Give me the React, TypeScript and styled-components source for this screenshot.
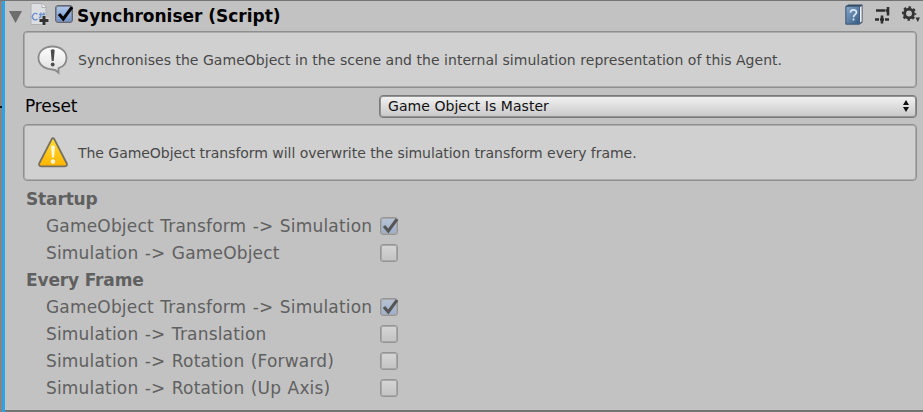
import React from "react";
import styled, { createGlobalStyle, css } from "styled-components";

const Global = createGlobalStyle`
  * { box-sizing: border-box; }
  body { margin: 0; overflow: hidden; background: #c2c2c2; font-family: "DejaVu Sans", Verdana, sans-serif; }
`;

const Inspector = styled.main`
  display: flex;
  width: 923px;
  height: 412px;
  background: #c2c2c2;
  border-top: 1px solid #747474;
`;

const Gutter = styled.div`
  width: 2px;
  flex: none;
  background: linear-gradient(#858585 0 105px, #151515 105px 107px, #858585 107px);
`;

const OverrideBar = styled.div`
  width: 3px;
  flex: none;
  background: #2fa4e4;
`;

const Component = styled.section`
  display: flex;
  flex-direction: column;
  flex: 1;
  height: 411px;
  padding-right: 6px;
  border-bottom: 2px solid #747474;
`;

const Header = styled.header`
  display: flex;
  height: 30px;
  align-items: flex-start;
  padding: 2px 0 0 4px;
`;

const Tools = styled.div`
  display: flex;
  gap: 12px;
  margin-left: auto;
  margin-right: -4px;
`;

const Label = styled.span<{ $size: number; $spacing?: number; $bold?: boolean; $color?: string }>`
  white-space: pre;
  line-height: 20px;
  font-size: ${(p) => p.$size}px;
  letter-spacing: ${(p) => p.$spacing ?? 0}px;
  font-weight: ${(p) => (p.$bold ? 700 : 400)};
  color: ${(p) => p.$color ?? "#000"};
`;

const Title = styled(Label)`
  margin-top: 3px;
`;

const HelpBox = styled.div`
  display: flex;
  align-items: center;
  flex: none;
  width: 894px;
  height: 57px;
  margin-left: 18px;
  padding: 1px 0 0 13px;
  gap: 9px;
  background: #d0d0d0;
  border: 1px solid #8f8f8f;
  border-radius: 4px;
  box-shadow: inset 0 0 0 1px #acacac;
`;

const Field = styled.div`
  display: flex;
  align-items: center;
  height: 36px;
  padding-left: 20px;
`;

const FieldName = styled.div`
  width: 354px;
  display: flex;
`;

const Popup = styled.button`
  display: flex;
  align-items: center;
  justify-content: space-between;
  width: 538px;
  height: 23px;
  padding: 0 7px 0 8px;
  border: 1px solid #7a7a7a;
  border-radius: 4px;
  background: linear-gradient(#f3f3f3, #c9c7c9);
  box-shadow: inset 0 0 0 1px #929292;
  font-family: inherit;
`;

const Settings = styled.div`
  display: flex;
  flex-direction: column;
  padding: 5px 0 0 21px;
`;

const Row = styled.div`
  display: flex;
  align-items: center;
  height: 27px;
`;

const RowName = styled.div<{ $indent?: boolean }>`
  display: flex;
  width: 354px;
  padding-left: ${(p) => (p.$indent ? 20 : 0)}px;
  padding-bottom: 2px;
  word-spacing: ${(p) => (p.$indent ? 0.8 : 0)}px;
`;

const Box = styled.span<{ $on?: boolean; $strong?: boolean }>`
  display: block;
  flex: none;
  width: 18px;
  height: 18px;
  margin-bottom: 1px;
  border: 1px solid #959595;
  border-radius: 3px;
  background: ${(p) => (p.$on ? "linear-gradient(#b7c3d4, #9dafcb)" : "linear-gradient(#d6d6d6, #c3c3c3)")};
  box-shadow: inset 0 0 0 1px ${(p) => (p.$strong ? "#7f8aa0" : "#a8a8a8")};
  ${(p) => p.$strong && css`
    border-color: #636874;
    background: linear-gradient(#b1c8e8, #6f91cb);
  `}
  svg { display: block; margin: -1px 0 0 -1px; overflow: visible; }
`;

const HeaderBox = styled(Box)`
  margin: 2px 4px 0 5px;
`;

const Foldout = styled.svg`
  margin: 8px 7px 0 0;
`;

function Toggle({ on }: { on?: boolean }) {
  return (
    <Box $on={on}>
      {on && <Check color="#555" />}
    </Box>
  );
}

function Check({ color }: { color: string }) {
  return (
    <svg width="19" height="18" viewBox="0 0 19 18">
      <path d="M4 9 8.300 14 17 2.200" fill="none" stroke={color} strokeWidth="3.100" />
    </svg>
  );
}

function ScriptIcon() {
  return (
    <svg width="20" height="23" viewBox="0 0 20 23">
      <path d="M1 .5h11.500l3.500 3.500v17.500h-15z" fill="#dcdee1" stroke="#aeb0b3" />
      <path d="M12 .5v4h4" fill="#f4f4f4" stroke="#aeb0b3" />
      <path d="M7.500 11.300A3 3.300 0 1 0 7.500 16M11 9.500l-1 7M14 9.500l-.8 4M9 11.500h6M8.700 14.500h4" fill="none" stroke="#6b8fd0" strokeWidth="1.300" />
      <path d="M14 12.500v10M9.500 17h10" stroke="#d6d6d6" strokeWidth="4.600" />
      <path d="M14 13v9M9.500 17.500h9" stroke="#333" strokeWidth="3" />
    </svg>
  );
}

function InfoIcon() {
  return (
    <svg width="32" height="32" viewBox="0 0 32 32">
      <defs>
        <linearGradient id="bubble" x1="0" y1="0" x2="0" y2="1">
          <stop offset="0" stopColor="#fff" />
          <stop offset="1" stopColor="#dcdcdc" />
        </linearGradient>
      </defs>
      <path d="M15.500 2.500C7 2.500 1.500 7.500 1.500 14S7 25 15.500 25.500q3 0 6 3.200v-4.500C27 22.500 29.500 18.500 29.500 14 29.500 7.500 24 2.500 15.500 2.500Z" fill="url(#bubble)" stroke="#8a8a8a" strokeWidth="1.800" />
      <path d="M13.700 6q2-1.600 4 0L16.700 17h-2z" fill="#4c4c4c" />
      <circle cx="15.700" cy="20.500" r="1.900" fill="#4c4c4c" />
    </svg>
  );
}

function WarningIcon() {
  return (
    <svg width="32" height="32" viewBox="0 0 32 32">
      <defs>
        <linearGradient id="amber" x1="0" y1="0" x2="0" y2="1">
          <stop offset="0" stopColor="#ffdc35" />
          <stop offset="1" stopColor="#ffb400" />
        </linearGradient>
      </defs>
      <path d="M14.600 2.300Q16 .2 17.400 2.300L29.800 26.500Q30.500 29.300 28 29.300H4Q1.500 29.300 2.200 26.500Z" fill="url(#amber)" stroke="#777061" strokeWidth="1.800" strokeLinejoin="round" />
      <path d="M14 9.500q2-2 4 0L17 20.500h-2z" fill="#fff8d8" />
      <circle cx="16" cy="24.500" r="2.200" fill="#fff8d8" />
    </svg>
  );
}

function BookIcon() {
  return (
    <svg width="19" height="22" viewBox="0 0 19 22">
      <defs>
        <linearGradient id="cover" x1="0" y1="0" x2="1" y2="1">
          <stop offset="0" stopColor="#88a9cc" />
          <stop offset="1" stopColor="#355982" />
        </linearGradient>
      </defs>
      <path d="M1.500 3 4.500 1.500h14v18l-3 2h-14z" fill="#384d66" />
      <path d="M16 4 17.700 3v15.500L16 19.700z" fill="#eee" />
      <path d="M2 3.500h13.500v17.500H2z" fill="url(#cover)" stroke="#46617f" />
      <path d="M6.500 9.500c0-3.500 6-3.500 6-.2 0 2.500-3 2.300-3 5M9.500 15.500v2" fill="none" stroke="#dce8f6" strokeWidth="1.700" />
    </svg>
  );
}

function PresetIcon() {
  return (
    <svg width="15" height="22" viewBox="0 0 15 22">
      <path d="M1 7.500h9M13 4v8.500M10.500 7.500h3M0 16.500h4M10 16.500h4M5 16.500h4M7 12.500v8" fill="none" stroke="#2d2d2d" strokeWidth="2.600" />
    </svg>
  );
}

function GearIcon() {
  return (
    <svg width="19" height="21" viewBox="0 0 19 21">
      <circle cx="7" cy="10.500" r="4.400" fill="none" stroke="#333" strokeWidth="2.900" />
      <circle cx="7" cy="10.500" r="6.300" fill="none" stroke="#333" strokeWidth="2" strokeDasharray="2.500 2.448" strokeDashoffset="1.250" />
      <path d="M13.500 14.500h4.500L15.800 19z" fill="#333" />
    </svg>
  );
}

type Setting = { name: string; on?: boolean; heading?: boolean };

const settings: Setting[] = [
  { name: "Startup", heading: true },
  { name: "GameObject Transform -> Simulation", on: true },
  { name: "Simulation -> GameObject" },
  { name: "Every Frame", heading: true },
  { name: "GameObject Transform -> Simulation", on: true },
  { name: "Simulation -> Translation" },
  { name: "Simulation -> Rotation (Forward)" },
  { name: "Simulation -> Rotation (Up Axis)" },
];

export default function App() {
  return (
    <>
      <Global />
      <Inspector>
        <Gutter />
        <OverrideBar />
        <Component>
          <Header>
            <Foldout width="14" height="13" viewBox="0 0 14 13"><path d="M0 0h13L6.500 12z" fill="#6d6d6d" /></Foldout>
            <ScriptIcon />
            <HeaderBox $strong><Check color="#050505" /></HeaderBox>
            <Title $size={17} $spacing={-0.02} $bold>Synchroniser (Script)</Title>
            <Tools><BookIcon /><PresetIcon /><GearIcon /></Tools>
          </Header>
          <HelpBox>
            <InfoIcon />
            <Label $size={14} $spacing={0.03} $color="#484848">Synchronises the GameObject in the scene and the internal simulation representation of this Agent.</Label>
          </HelpBox>
          <Field>
            <FieldName><Label $size={17} $spacing={-0.1}>Preset</Label></FieldName>
            <Popup>
              <Label $size={14} $spacing={0.05} $color="#111">Game Object Is Master</Label>
              <svg width="6" height="12" viewBox="0 0 6 12"><path d="M0 5 3 0l3 5zM0 7h6l-3 5z" fill="#111" /></svg>
            </Popup>
          </Field>
          <HelpBox>
            <WarningIcon />
            <Label $size={14} $spacing={-0.04} $color="#484848">The GameObject transform will overwrite the simulation transform every frame.</Label>
          </HelpBox>
          <Settings>
            {settings.map((s, i) => (
              <Row key={i}>
                <RowName $indent={!s.heading}>
                  <Label $size={17} $spacing={s.heading ? -0.15 : 0.18} $bold={s.heading} $color="#606060">{s.name}</Label>
                </RowName>
                {!s.heading && <Toggle on={s.on} />}
              </Row>
            ))}
          </Settings>
        </Component>
      </Inspector>
    </>
  );
}
